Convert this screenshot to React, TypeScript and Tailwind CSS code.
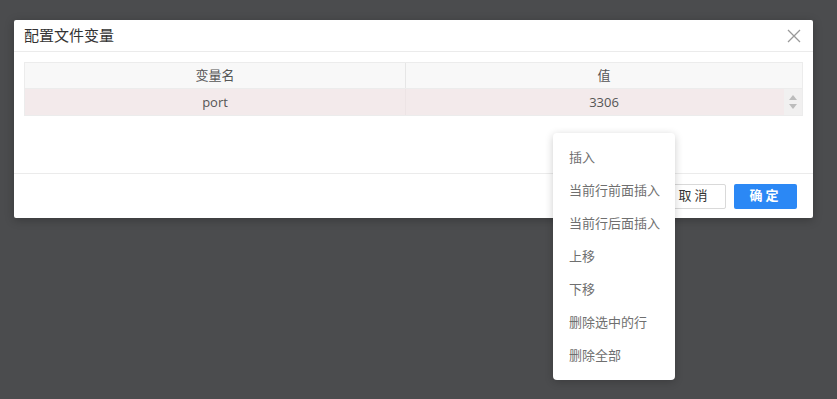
import React from 'react'

const menuItems = ['插入', '当前行前面插入', '当前行后面插入', '上移', '下移', '删除选中的行', '删除全部']

export default function App() {
  return (
    <div
      className="relative w-[837px] h-[399px] overflow-hidden bg-[#4b4c4e] pt-[20px] pl-[14px]"
      style={{ fontFamily: '"Open Sans", "Noto Sans CJK SC", sans-serif' }}
    >
      {/* Dialog */}
      <div className="w-[799px] bg-white rounded-[2px] shadow-[0_2px_10px_rgba(0,0,0,0.25)]">
        <div className="h-[32px] flex items-center justify-between pl-[10px] pr-[12px] border-b border-[#ebebeb]">
          <span className="text-[15px] text-[#333]">配置文件变量</span>
          <svg width="14" height="14" viewBox="0 0 14 14" className="text-[#999]">
            <path d="M1 1L13 13M13 1L1 13" stroke="currentColor" strokeWidth="1.3" fill="none" />
          </svg>
        </div>

        <div className="px-[10px] pt-[10px] h-[121px]">
          <div className="border border-[#ececec] text-[13px] text-[#555]">
            <div className="flex h-[26px] bg-[#f8f8f8] border-b border-[#ececec]">
              <div className="w-[381px] flex items-center justify-center border-r border-[#e6e6e6]">变量名</div>
              <div className="flex-1 flex items-center justify-center">值</div>
            </div>
            <div className="flex h-[26px] bg-[#f3eaeb]">
              <div className="w-[381px] flex items-center justify-center pt-[2px] border-r border-[#ede4e5]">port</div>
              <div className="flex-1 flex items-center justify-center pt-[2px] pl-[18px]">3306</div>
              <div className="w-[18px] bg-[#f1f0f0] flex flex-col items-center justify-center gap-[4px]">
                <svg width="8" height="5" viewBox="0 0 8 5"><path d="M4 0L8 5H0Z" fill="#bcbcbc" /></svg>
                <svg width="8" height="5" viewBox="0 0 8 5"><path d="M0 0H8L4 5Z" fill="#bcbcbc" /></svg>
              </div>
            </div>
          </div>
        </div>

        <div className="h-[45px] border-t border-[#ebebeb] flex items-center justify-end gap-[8px] pr-[16px]">
          <button className="w-[63px] h-[25px] border border-[#d9d9d9] rounded-[2px] text-[13px] text-[#333] tracking-[3px] bg-white">
            取消
          </button>
          <button className="w-[63px] h-[25px] rounded-[2px] text-[13px] text-white font-bold tracking-[3px] bg-[#2b88f5]">
            确定
          </button>
        </div>
      </div>

      {/* Context menu */}
      <div className="absolute left-[553px] top-[133px] w-[122px] py-[8px] bg-white rounded-[4px] shadow-[0_2px_8px_rgba(0,0,0,0.2)]">
        {menuItems.map((item) => (
          <div key={item} className="h-[33px] flex items-center pl-[16px] text-[13px] text-[#6f6f6f]">
            {item}
          </div>
        ))}
      </div>
    </div>
  )
}
